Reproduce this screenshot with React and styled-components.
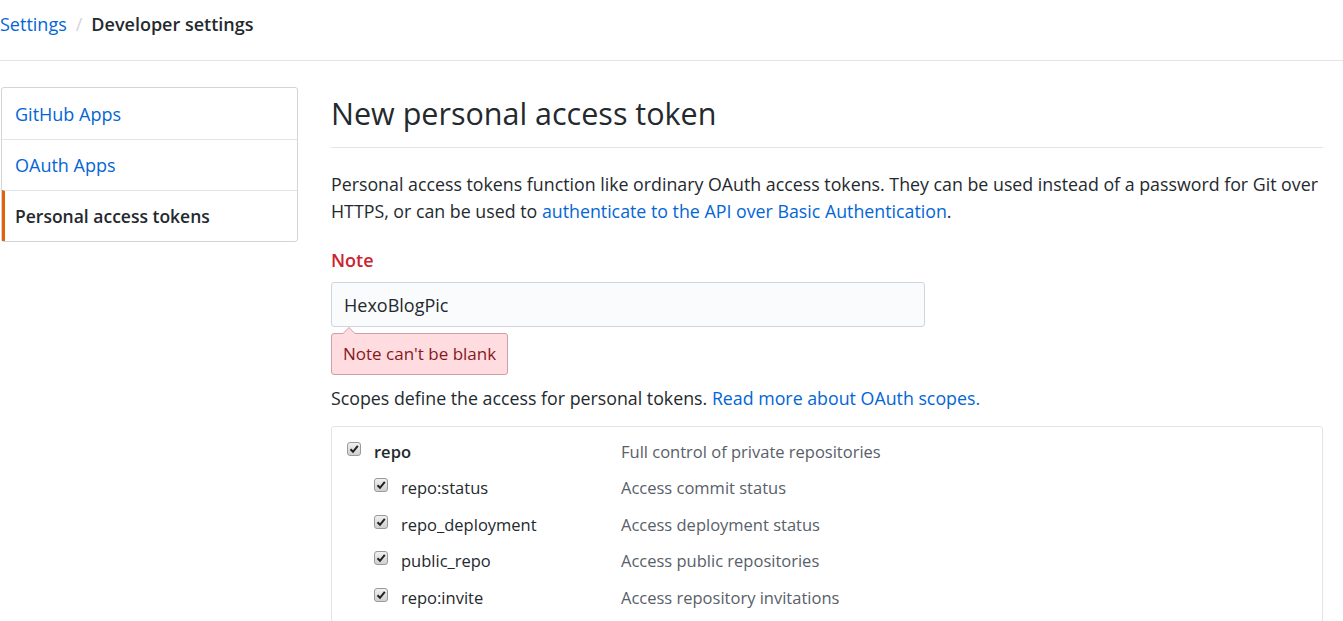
import React from "react";
import styled, { createGlobalStyle } from "styled-components";

const GlobalStyle = createGlobalStyle`
  body {
    margin: 0;
    background: #fff;
    font-family: "Open Sans", "Noto Sans", sans-serif;
    color: #24292e;
  }
`;

const Header = styled.div`
  height: 61px;
  border-bottom: 1px solid #e1e4e8;
  display: flex;
  align-items: flex-start;
  padding-top: 12px;
  box-sizing: border-box;
  font-size: 18px;
`;

const Crumb = styled.a`
  color: #0366d6;
  text-decoration: none;
`;

const Divider = styled.span`
  color: #d1d5da;
  margin: 0 9px;
`;

const Current = styled.span`
  font-weight: 600;
  color: #24292e;
`;

const Layout = styled.div`
  display: flex;
  gap: 33px;
  padding: 26px 20px 0 1px;
`;

const Sidebar = styled.nav`
  width: 297px;
  flex-shrink: 0;
  align-self: flex-start;
  border: 1px solid #d1d5da;
  border-radius: 3px;
  box-sizing: border-box;
`;

const MenuItem = styled.a`
  display: flex;
  align-items: center;
  height: 51px;
  box-sizing: border-box;
  padding-left: ${(p) => (p.selected ? "10px" : "13px")};
  border-top: ${(p) => (p.first ? "none" : "1px solid #e1e4e8")};
  border-left: ${(p) => (p.selected ? "3px solid #e36209" : "none")};
  color: ${(p) => (p.selected ? "#24292e" : "#0366d6")};
  font-weight: ${(p) => (p.selected ? 600 : 400)};
  font-size: ${(p) => (p.selected ? "17.5px" : "18px")};
  text-decoration: none;
`;

const Main = styled.main`
  flex: 1;
  min-width: 0;
`;

const Title = styled.h1`
  margin: 0;
  font-size: 30.5px;
  font-weight: 400;
  padding: 6px 0 14px;
  border-bottom: 1px solid #e1e4e8;
  line-height: 40px;
`;

const Intro = styled.p`
  font-size: 17.8px;
  line-height: 27px;
  margin: 23px 0 0;
`;

const Link = styled.a`
  color: #0366d6;
  text-decoration: none;
`;

const Label = styled.div`
  color: #cb2431;
  font-weight: 600;
  font-size: 18px;
  margin-top: 23px;
  line-height: 24px;
`;

const Input = styled.input`
  display: block;
  width: 594px;
  height: 45px;
  box-sizing: border-box;
  margin-top: 10px;
  padding: 0 12px;
  background: #fafbfc;
  border: 1px solid #d1d5da;
  border-radius: 3px;
  font-family: inherit;
  font-size: 18px;
  color: #24292e;
`;

const ErrorTip = styled.div`
  position: relative;
  display: inline-block;
  margin-top: 6px;
  padding: 0 11px;
  height: 42px;
  line-height: 40px;
  box-sizing: border-box;
  background: #ffdce0;
  border: 1px solid #cea0a5;
  border-radius: 3px;
  color: #86181d;
  font-size: 17px;

  &::before,
  &::after {
    content: "";
    position: absolute;
    left: 11px;
    border: 6px solid transparent;
  }
  &::before {
    top: -13px;
    border-bottom-color: #cea0a5;
  }
  &::after {
    top: -12px;
    border-bottom-color: #ffdce0;
  }
`;

const Scopes = styled.p`
  font-size: 17.8px;
  line-height: 24px;
  margin: 11px 0 0;
`;

const ScopeBox = styled.div`
  margin-top: 16px;
  border: 1px solid #e1e4e8;
  border-radius: 3px;
  padding: 6px 0 0 15px;
  height: 300px;
`;

const ScopeRow = styled.div`
  display: flex;
  align-items: center;
  height: 36.5px;
  font-size: 16.5px;
`;

const ScopeName = styled.span`
  width: ${(p) => (p.child ? "247px" : "274px")};
  margin-left: ${(p) => (p.child ? "27px" : "0")};
  display: flex;
  align-items: center;
  font-weight: ${(p) => (p.child ? 400 : 600)};
`;

const Check = styled.span`
  width: 14px;
  height: 14px;
  margin-right: 13px;
  margin-top: -5px;
  box-sizing: border-box;
  border: 1px solid #9a9a9a;
  border-radius: 3px;
  background: linear-gradient(#f0f0f0, #d0d0d0);
  display: inline-flex;
  align-items: center;
  justify-content: center;
`;

const Desc = styled.span`
  color: #586069;
`;

const CheckBox = () => (
  <Check>
    <svg width="10" height="10" viewBox="0 0 10 10">
      <path d="M1.5 5.2 L4 7.8 L8.8 1.8" fill="none" stroke="#222" strokeWidth="2" />
    </svg>
  </Check>
);

const scopes = [
  ["repo", "Full control of private repositories", false],
  ["repo:status", "Access commit status", true],
  ["repo_deployment", "Access deployment status", true],
  ["public_repo", "Access public repositories", true],
  ["repo:invite", "Access repository invitations", true],
];

export default function App() {
  return (
    <>
      <GlobalStyle />
      <Header>
        <Crumb href="#">Settings</Crumb>
        <Divider>/</Divider>
        <Current>Developer settings</Current>
      </Header>
      <Layout>
        <Sidebar>
          <MenuItem first href="#">GitHub Apps</MenuItem>
          <MenuItem href="#">OAuth Apps</MenuItem>
          <MenuItem selected href="#">Personal access tokens</MenuItem>
        </Sidebar>
        <Main>
          <Title>New personal access token</Title>
          <Intro>
            Personal access tokens function like ordinary OAuth access tokens. They can be used
            instead of a password for Git over HTTPS, or can be used to{" "}
            <Link href="#">authenticate to the API over Basic Authentication</Link>.
          </Intro>
          <Label>Note</Label>
          <Input defaultValue="HexoBlogPic" />
          <ErrorTip>Note can't be blank</ErrorTip>
          <Scopes>
            Scopes define the access for personal tokens.{" "}
            <Link href="#">Read more about OAuth scopes.</Link>
          </Scopes>
          <ScopeBox>
            {scopes.map(([name, desc, child]) => (
              <ScopeRow key={name}>
                <ScopeName child={child}>
                  <CheckBox />
                  {name}
                </ScopeName>
                <Desc>{desc}</Desc>
              </ScopeRow>
            ))}
          </ScopeBox>
        </Main>
      </Layout>
    </>
  );
}
